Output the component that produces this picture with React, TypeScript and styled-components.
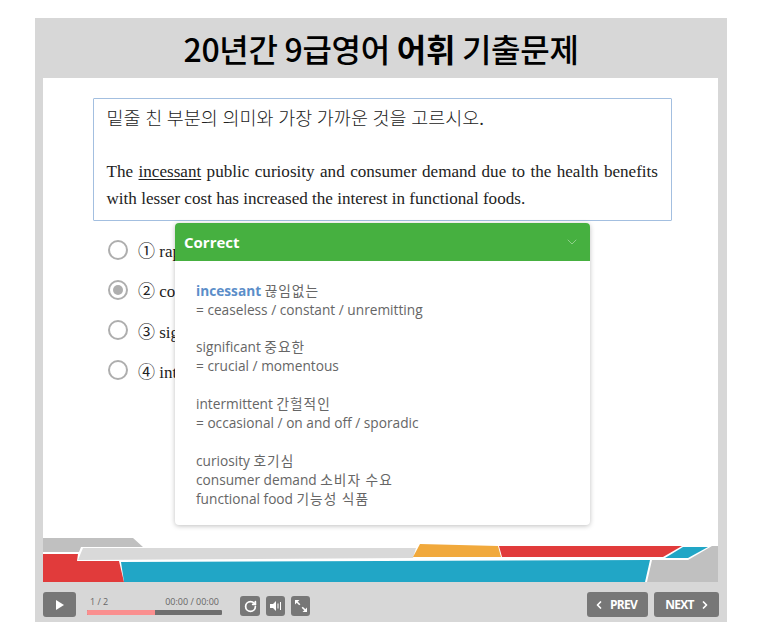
import React from "react";
import styled, { createGlobalStyle } from "styled-components";
import { ChevronDown, ChevronLeft, ChevronRight, RotateCw } from "lucide-react";

const Global = createGlobalStyle`
  html, body { margin: 0; padding: 0; background: #fff; }
  body { font-family: "Open Sans", "Noto Sans CJK KR", sans-serif; }
`;

const Page = styled.div`
  width: 760px;
  height: 640px;
  padding: 18px 0 0 35px;
  box-sizing: border-box;
  overflow: hidden;
`;

const Frame = styled.div`
  width: 692px;
  height: 604px;
  background: #d7d7d7;
  display: flex;
  flex-direction: column;
`;

const Title = styled.h1`
  height: 60px;
  margin: 0;
  display: flex;
  align-items: center;
  justify-content: center;
  font-family: "Noto Sans CJK KR", sans-serif;
  font-size: 32px;
  font-weight: 500;
  letter-spacing: -0.3px;
  color: #000;
  white-space: pre;
  b { font-weight: 700; }
`;

const Stage = styled.div`
  position: relative;
  width: 675px;
  height: 504px;
  margin-left: 8px;
  background: #fff;
  display: flex;
  flex-direction: column;
`;

const Question = styled.div`
  width: 579px;
  height: 123px;
  margin: 20px 0 0 50px;
  padding: 7px 13px 0 12.5px;
  box-sizing: border-box;
  border: 1px solid #a3bfe0;
  border-radius: 1px;
  font-family: "Liberation Serif", "Noto Sans CJK KR", serif;
  font-size: 17.1px;
  line-height: 26.5px;
  color: #222;
`;

const Prompt = styled.div`
  font-family: "Liberation Serif", "Noto Sans CJK KR", serif;
  font-size: 18.5px;
  font-weight: 300;
  margin-bottom: 26.5px;
`;

const Passage = styled.div`
  text-align: justify;
  u { text-underline-offset: 2px; }
`;

const Options = styled.div`
  margin: 18.5px 0 0 65px;
  display: flex;
  flex-direction: column;
  gap: 20.3px;
`;

const Option = styled.div`
  display: flex;
  align-items: center;
  gap: 10px;
  height: 20px;
  font-family: "Liberation Serif", "Noto Sans CJK KR", serif;
  font-size: 17px;
  color: #222;
  white-space: pre;
`;

const Radio = styled.span<{ $on?: boolean }>`
  width: 20px;
  height: 20px;
  box-sizing: border-box;
  border-radius: 50%;
  border: 2px solid #aeaeae;
  background: #fff;
  display: flex;
  align-items: center;
  justify-content: center;
  &::after {
    content: "";
    width: 10px;
    height: 10px;
    border-radius: 50%;
    background: ${(p) => (p.$on ? "#aeaeae" : "transparent")};
  }
`;

const Popup = styled.div`
  position: absolute;
  left: 132px;
  top: 145px;
  width: 415px;
  height: 302px;
  background: #fff;
  border-radius: 4px;
  box-shadow: 0 1px 5px rgba(0, 0, 0, 0.25);
  overflow: hidden;
`;

const PopupHeader = styled.div`
  height: 38px;
  box-sizing: border-box;
  padding: 0 10px 0 9px;
  background: #46b040;
  color: #fff;
  display: flex;
  align-items: center;
  justify-content: space-between;
  font-size: 15px;
  font-weight: 700;
`;

const PopupBody = styled.div`
  padding: 19.5px 21px 0;
  font-family: "Open Sans", "Noto Sans CJK KR", sans-serif;
  font-size: 13.7px;
  line-height: 19px;
  color: #666;
  display: flex;
  flex-direction: column;
  gap: 18.8px;
`;

const Entry = styled.div`
  div { height: 19px; white-space: nowrap; }
`;

const Word = styled.b`
  color: #5b8ec9;
  font-weight: 700;
`;

const Ko = styled.span`
  letter-spacing: 1px;
`;

const Decor = styled.svg`
  position: absolute;
  left: 0;
  bottom: 0;
  display: block;
`;

const Controls = styled.div`
  height: 40px;
  margin-left: 8px;
  width: 676px;
  display: flex;
  align-items: flex-start;
`;

const ControlButton = styled.button<{ $w: number; $h: number; $t: number; $l: number; $pad?: string }>`
  width: ${(p) => p.$w}px;
  height: ${(p) => p.$h}px;
  margin: ${(p) => p.$t}px 0 0 ${(p) => p.$l}px;
  padding: ${(p) => p.$pad ?? "0"};
  box-sizing: border-box;
  border: 0;
  border-radius: 3px;
  background: #777;
  color: #fff;
  flex: none;
  display: flex;
  align-items: center;
  justify-content: center;
  gap: 5px;
  font-family: "Open Sans", sans-serif;
  font-size: 12px;
  font-weight: 700;
  letter-spacing: -0.7px;
`;

const Progress = styled.div`
  width: 135px;
  margin: 12px 0 0 11px;
  flex: none;
`;

const ProgressLabels = styled.div`
  display: flex;
  justify-content: space-between;
  padding: 0 3px;
  height: 15px;
  font-size: 9px;
  line-height: 15px;
  color: #666;
`;

const Track = styled.div`
  height: 5px;
  margin-top: 1px;
  background: #6f6f6f;
  border-radius: 1px;
  overflow: hidden;
`;

const Fill = styled.div`
  height: 100%;
  background: #fa8f8f;
`;

const Spacer = styled.div`
  flex: 1;
`;

export default function App() {
  return (
    <Page>
      <Global />
      <Frame>
        <Title>
          20년간 9급영어 <b>어휘</b> 기출문제
        </Title>
        <Stage>
          <Question>
            <Prompt>밑줄 친 부분의 의미와 가장 가까운 것을 고르시오.</Prompt>
            <Passage>
              The <u>incessant</u> public curiosity and consumer demand due to the health benefits
              with lesser cost has increased the interest in functional foods.
            </Passage>
          </Question>
          <Options>
            <Option><Radio />① rapid</Option>
            <Option><Radio $on />② constant</Option>
            <Option><Radio />③ significant</Option>
            <Option><Radio />④ intermittent</Option>
          </Options>
          <Decor width="675" height="46" viewBox="43 537 675 46">
            <polygon fill="#c0c0c0" points="43,539 133,539 143,548 81,548 79,553 43,553" />
            <polygon fill="#d9d9d9" points="83,549 416,549 413,559 78,561" />
            <polygon fill="#e13b3b" points="43,555 78,555 77,562 119,562 124,583 43,583" />
            <polygon fill="#21a6c6" points="121,563 650,561 645,583 124,583" />
            <polygon fill="#c0c0c0" points="652,561 688,561 712,547 718,547 718,583 647,583" />
            <polygon fill="#21a6c6" points="683,548 708,548 688,559 665,559" />
            <polygon fill="#e13b3b" points="499,547 682,547 663,558 502,558" />
            <polygon fill="#f1a93c" points="420,545 498,547 501,558 413,558" />
          </Decor>
          <Popup>
            <PopupHeader>
              Correct
              <ChevronDown size={16} strokeWidth={1.5} color="#8fd08b" />
            </PopupHeader>
            <PopupBody>
              <Entry>
                <div><Word>incessant</Word> <Ko>끊임없는</Ko></div>
                <div>= ceaseless / constant / unremitting</div>
              </Entry>
              <Entry>
                <div>significant <Ko>중요한</Ko></div>
                <div>= crucial / momentous</div>
              </Entry>
              <Entry>
                <div>intermittent <Ko>간헐적인</Ko></div>
                <div>= occasional / on and off / sporadic</div>
              </Entry>
              <Entry>
                <div>curiosity <Ko>호기심</Ko></div>
                <div>consumer demand <Ko>소비자 수요</Ko></div>
                <div>functional food <Ko>기능성 식품</Ko></div>
              </Entry>
            </PopupBody>
          </Popup>
        </Stage>
        <Controls>
          <ControlButton $w={33} $h={25} $t={10} $l={0} aria-label="play">
            <svg width="10" height="10" viewBox="0 0 10 10"><polygon points="1,0 9,5 1,10" fill="#fff" /></svg>
          </ControlButton>
          <Progress>
            <ProgressLabels><span>1 / 2</span><span>00:00 / 00:00</span></ProgressLabels>
            <Track><Fill style={{ width: `${(68 / 135) * 100}%` }} /></Track>
          </Progress>
          <ControlButton $w={20} $h={20} $t={14} $l={18} aria-label="replay">
            <RotateCw size={13} strokeWidth={3.2} />
          </ControlButton>
          <ControlButton $w={19} $h={20} $t={14} $l={6} aria-label="mute">
            <svg width="12" height="10" viewBox="0 0 12 10">
              <polygon points="0,3 3,3 6,0 6,10 3,7 0,7" fill="#fff" />
              <rect x="7.5" y="2.5" width="1" height="5" fill="#fff" />
              <rect x="10" y="1" width="1" height="8" fill="#fff" />
            </svg>
          </ControlButton>
          <ControlButton $w={19} $h={20} $t={14} $l={6} aria-label="fullscreen">
            <svg width="12" height="12" viewBox="0 0 12 12" fill="none">
              <polygon points="0,0 4.5,0 0,4.5" fill="#fff" />
              <polygon points="12,12 7.5,12 12,7.5" fill="#fff" />
              <line x1="2" y1="2" x2="4.8" y2="4.8" stroke="#fff" strokeWidth="1.6" />
              <line x1="7.2" y1="7.2" x2="10" y2="10" stroke="#fff" strokeWidth="1.6" />
            </svg>
          </ControlButton>
          <Spacer />
          <ControlButton $w={61} $h={25} $t={10} $l={0} $pad="0 5px 0 0">
            <ChevronLeft size={12} strokeWidth={3.5} /> PREV
          </ControlButton>
          <ControlButton $w={65} $h={25} $t={10} $l={6} $pad="0 2px 0 5px">
            NEXT <ChevronRight size={12} strokeWidth={3.5} />
          </ControlButton>
        </Controls>
      </Frame>
    </Page>
  );
}
